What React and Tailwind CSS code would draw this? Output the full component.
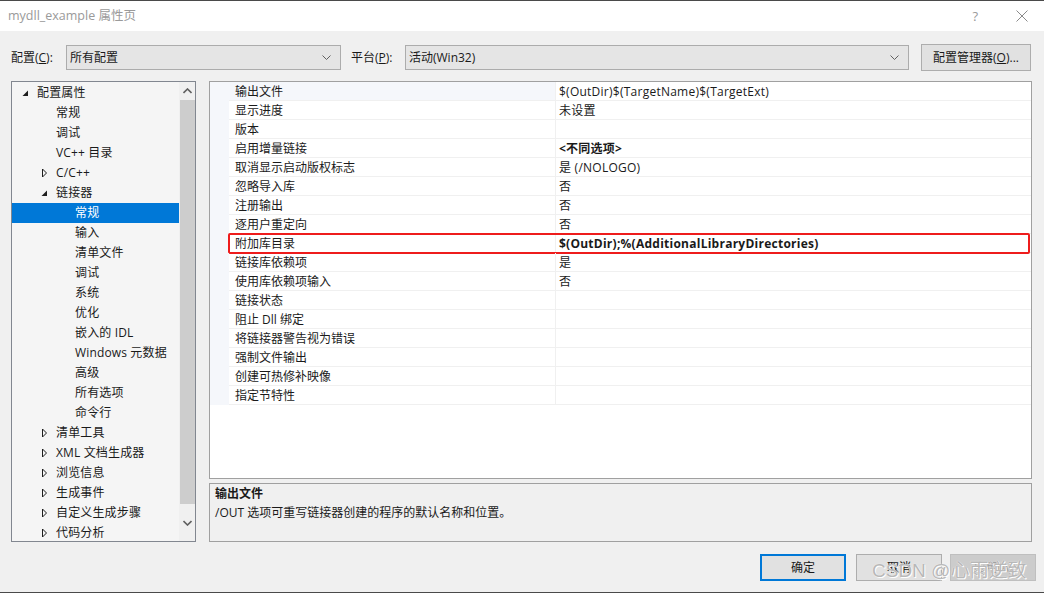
import React from 'react';

const treeItems = [
    { label: '配置属性', level: 0, icon: 'open' },
    { label: '常规', level: 1 },
    { label: '调试', level: 1 },
    { label: 'VC++ 目录', level: 1 },
    { label: 'C/C++', level: 1, icon: 'closed' },
    { label: '链接器', level: 1, icon: 'open' },
    { label: '常规', level: 2, selected: true },
    { label: '输入', level: 2 },
    { label: '清单文件', level: 2 },
    { label: '调试', level: 2 },
    { label: '系统', level: 2 },
    { label: '优化', level: 2 },
    { label: '嵌入的 IDL', level: 2 },
    { label: 'Windows 元数据', level: 2 },
    { label: '高级', level: 2 },
    { label: '所有选项', level: 2 },
    { label: '命令行', level: 2 },
    { label: '清单工具', level: 1, icon: 'closed' },
    { label: 'XML 文档生成器', level: 1, icon: 'closed' },
    { label: '浏览信息', level: 1, icon: 'closed' },
    { label: '生成事件', level: 1, icon: 'closed' },
    { label: '自定义生成步骤', level: 1, icon: 'closed' },
    { label: '代码分析', level: 1, icon: 'closed' },
];

const levelPad = ['pl-[10px]', 'pl-[29px]', 'pl-[48px]'];

const props = [
    { name: '输出文件', value: '$(OutDir)$(TargetName)$(TargetExt)' },
    { name: '显示进度', value: '未设置' },
    { name: '版本', value: '' },
    { name: '启用增量链接', value: '<不同选项>', bold: true },
    { name: '取消显示启动版权标志', value: '是 (/NOLOGO)' },
    { name: '忽略导入库', value: '否' },
    { name: '注册输出', value: '否' },
    { name: '逐用户重定向', value: '否' },
    { name: '附加库目录', value: '$(OutDir);%(AdditionalLibraryDirectories)', bold: true, marked: true },
    { name: '链接库依赖项', value: '是' },
    { name: '使用库依赖项输入', value: '否' },
    { name: '链接状态', value: '' },
    { name: '阻止 Dll 绑定', value: '' },
    { name: '将链接器警告视为错误', value: '' },
    { name: '强制文件输出', value: '' },
    { name: '创建可热修补映像', value: '' },
    { name: '指定节特性', value: '' },
];

const TreeIcon = ({ type }) => {
    if (type === 'open') {
        return (
            <svg width="7" height="7" viewBox="0 0 7 7" className="mt-[1px]">
                <path d="M6 0.5 L6 6 L0.5 6 Z" fill="#1e1e1e" />
            </svg>
        );
    }
    if (type === 'closed') {
        return (
            <svg width="7" height="10" viewBox="0 0 7 10">
                <path d="M1.5 1 L5.5 5 L1.5 9 Z" fill="none" stroke="#1e1e1e" strokeWidth="1" />
            </svg>
        );
    }
    return null;
};

const Chevron = () => (
    <svg width="9" height="6" viewBox="0 0 9 6">
        <path d="M0.5 0.5 L4.5 4.5 L8.5 0.5" fill="none" stroke="#606060" strokeWidth="1" />
    </svg>
);

const Combo = ({ width, text }) => (
    <div className={`${width} h-[25px] bg-[#e5e5e5] border border-[#acacac] flex items-center justify-between pl-[3px] pr-[9px]`}>
        <span>{text}</span>
        <Chevron />
    </div>
);

const App = () => {
    return (
        <div className="w-[1044px] h-[593px] bg-[#f0f0f0] border-t border-b border-[#4a4a4a] relative overflow-hidden text-[12px] leading-none text-[#1a1a1a] font-['Open_Sans','Noto_Sans_CJK_SC',sans-serif]">
            {/* Title bar */}
            <div className="h-[30px] bg-white flex items-center justify-between pl-[8px] pr-[16px]">
                <span className="text-[#9a9a9a] text-[12.5px]">mydll_example 属性页</span>
                <div className="flex items-center gap-[38px]">
                    <span className="text-[#9a9a9a] text-[13px]">?</span>
                    <svg width="12" height="12" viewBox="0 0 12 12">
                        <path d="M0.5 0.5 L11.5 11.5 M11.5 0.5 L0.5 11.5" stroke="#8a8a8a" strokeWidth="1" />
                    </svg>
                </div>
            </div>

            {/* Config row */}
            <div className="flex items-center h-[27px] mt-[13px] pl-[11px]">
                <span className="w-[55px]">配置(<span className="underline">C</span>):</span>
                <Combo width="w-[275px]" text="所有配置" />
                <span className="ml-[10px] w-[54px]">平台(<span className="underline">P</span>):</span>
                <Combo width="w-[504px]" text="活动(Win32)" />
                <div className="ml-[12px] w-[110px] h-[27px] bg-[#e1e1e1] border border-[#adadad] flex items-center justify-center">
                    配置管理器(<span className="underline">O</span>)...
                </div>
            </div>

            {/* Panels */}
            <div className="flex gap-[13px] mt-[10px] pl-[11px]">
                {/* Tree */}
                <div className="w-[185px] h-[461px] border border-[#828790] bg-[#f5f5f5] flex overflow-hidden">
                    <div className="flex-1 flex flex-col pt-[1px]">
                        {treeItems.map((item, i) => (
                            <div
                                key={i}
                                className={`h-[20px] shrink-0 flex items-center ${levelPad[item.level]} ${item.selected ? 'bg-[#0078d7] text-white' : ''}`}
                            >
                                <span className="w-[15px] flex items-center">
                                    <TreeIcon type={item.icon} />
                                </span>
                                <span className="tracking-[0.15px]">{item.label}</span>
                            </div>
                        ))}
                    </div>
                    <div className="w-[16px] bg-[#f0f0f0] flex flex-col items-center">
                        <div className="h-[18px] flex items-center justify-center">
                            <svg width="9" height="6" viewBox="0 0 9 6">
                                <path d="M0.5 5 L4.5 1 L8.5 5" fill="none" stroke="#606060" strokeWidth="1.6" />
                            </svg>
                        </div>
                        <div className="w-[15px] h-[404px] bg-[#cdcdcd]" />
                        <div className="flex-1 flex items-center justify-center">
                            <svg width="9" height="6" viewBox="0 0 9 6">
                                <path d="M0.5 1 L4.5 5 L8.5 1" fill="none" stroke="#606060" strokeWidth="1.6" />
                            </svg>
                        </div>
                    </div>
                </div>

                {/* Right side */}
                <div className="flex flex-col w-[823px]">
                    <div className="h-[398px] border border-[#a0a0a0] bg-white flex flex-col">
                        {props.map((p, i) => (
                            <div key={i} className="relative h-[19px] shrink-0 flex">
                                <div className="w-[19px] bg-[#f5f7fb]" />
                                <div className="flex-1 flex border-b border-[#f0f0f0]">
                                    <div className={`w-[327px] flex items-center pl-[6px] pt-[1px] border-r border-[#f0f0f0] ${i === 0 ? 'bg-[#f5f7fb]' : ''}`}>
                                        {p.name}
                                    </div>
                                    <div className={`flex-1 flex items-center pl-[3px] pt-[1px] tracking-[0.25px] ${p.bold ? 'font-bold' : ''}`}>
                                        {p.value}
                                    </div>
                                </div>
                                {p.marked && (
                                    <div className="absolute left-[18px] right-[1px] top-[-1px] bottom-[-1px] border-2 border-[#ee1c1c] rounded-[2px]" />
                                )}
                            </div>
                        ))}
                    </div>
                    <div className="mt-[4px] h-[59px] border border-[#a0a0a0] bg-[#f0f0f0] pl-[5px]">
                        <div className="font-bold h-[19px] flex items-center">输出文件</div>
                        <div className="h-[20px] flex items-center">/OUT 选项可重写链接器创建的程序的默认名称和位置。</div>
                    </div>
                </div>
            </div>

            {/* Buttons */}
            <div className="flex justify-end mt-[12px] pr-[8px]">
                <div className="w-[86px] h-[27px] bg-[#e1e1e1] border-2 border-[#0078d7] flex items-center justify-center">确定</div>
                <div className="ml-[10px] w-[86px] h-[27px] bg-[#e1e1e1] border border-[#adadad] flex items-center justify-center">取消</div>
                <div className="ml-[8px] w-[86px] h-[27px] bg-[#cccccc] border border-[#bfbfbf] flex items-center justify-center text-[#a0a0a0]">应用(A)</div>
            </div>

            {/* Watermark */}
            <div className="absolute left-[872px] top-[560px] text-[19px] text-[#b8b8b8] font-['Liberation_Sans','Noto_Sans_CJK_SC',sans-serif] [text-shadow:0_0_1px_#ffffff,1px_1px_0_#ffffff]">
                CSDN @心雨逆致
            </div>
        </div>
    );
};

export default App;
